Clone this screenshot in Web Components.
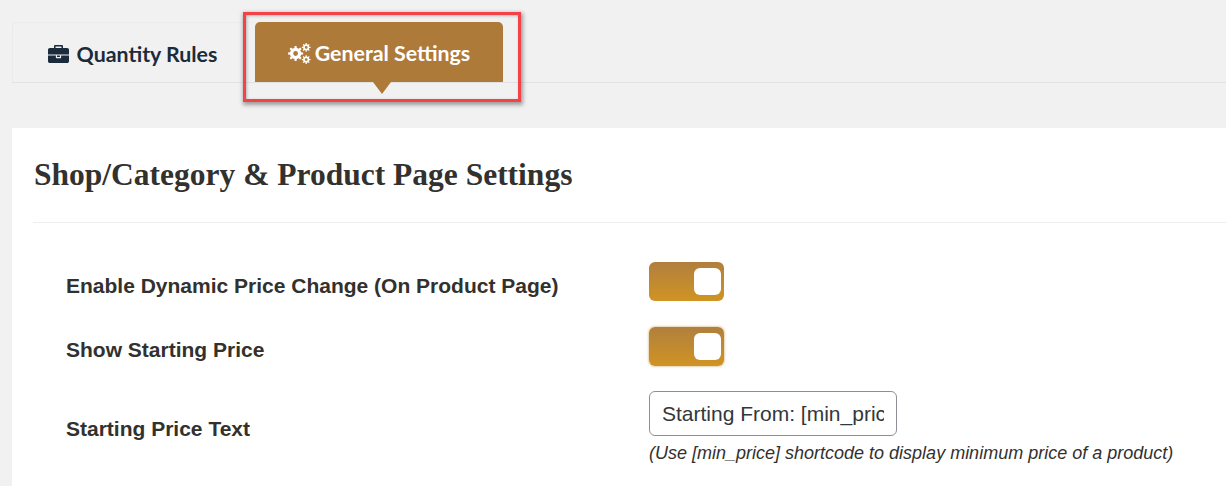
<!DOCTYPE html>
<html>
<head>
<meta charset="utf-8">
<title>General Settings</title>
<style>
    html, body { margin: 0; padding: 0; }
    body { background: #f1f1f1; height: 486px; overflow: hidden; position: relative; }
</style>
</head>
<body>
<settings-tabs>
    <settings-tab icon="briefcase">Quantity Rules</settings-tab>
    <settings-tab icon="cogs" active>General Settings</settings-tab>
</settings-tabs>
<settings-card heading="Shop/Category &amp; Product Page Settings">
    <settings-row label="Enable Dynamic Price Change (On Product Page)" style="height:65px"><gold-toggle></gold-toggle></settings-row>
    <settings-row label="Show Starting Price" style="height:65px;--label-pad:6px"><gold-toggle glow></gold-toggle></settings-row>
    <settings-row label="Starting Price Text" style="height:92px">
        <text-field value="Starting From: [min_price]" hint="(Use [min_price] shortcode to display minimum price of a product)"></text-field>
    </settings-row>
</settings-card>
<red-marker></red-marker>

<script>
(function () {
    // gear outline, centred on cx,cy
    function gear(cx, cy, outer, inner, hole, teeth) {
        let d = "";
        let step = Math.PI * 2 / teeth;
        for (let i = 0; i < teeth; i++) {
            let a = i * step;
            let pts = [[inner, a - step * 0.5], [inner, a - step * 0.27], [outer, a - step * 0.17], [outer, a + step * 0.17], [inner, a + step * 0.27]];
            for (let p of pts) {
                let x = (cx + p[0] * Math.cos(p[1])).toFixed(2);
                let y = (cy + p[0] * Math.sin(p[1])).toFixed(2);
                d += (d === "" || (i === 0 && p === pts[0]) ? "M" : "L") + x + " " + y;
            }
        }
        d += "Z";
        d += `M${cx - hole} ${cy}a${hole} ${hole} 0 1 0 ${hole * 2} 0a${hole} ${hole} 0 1 0 ${-hole * 2} 0Z`;
        return d;
    }

    const icons = {
        briefcase: `<svg width="21" height="18" viewBox="0 0 1792 1536" fill="currentColor"><path d="M640 256h512V128H640v128zm1152 640v480q0 66-47 113t-113 47H160q-66 0-113-47T0 1376V896h672v160q0 26 19 45t45 19h320q26 0 45-19t19-45V896h672zm-768 0v128H768V896h256zm768-480v384H0V416q0-66 47-113t113-47h352V96q0-40 28-68t68-28h576q40 0 68 28t28 68v160h352q66 0 113 47t47 113z"/></svg>`,
        cogs: `<svg width="23" height="21" viewBox="0 0 23 21" fill="currentColor"><path fill-rule="evenodd" d="${gear(7.6, 10.5, 7.6, 5.6, 2.4, 8)}${gear(18.2, 4.4, 4.4, 3.1, 1.4, 8)}${gear(18.2, 16.6, 4.4, 3.1, 1.4, 8)}"/></svg>`
    };

    class SettingsTabs extends HTMLElement {
        constructor() {
            super();
            this.attachShadow({ mode: "open" }).innerHTML = `
              <style>
                  :host {
                      display: flex;
                      margin: 22px 0 0 12px;
                      height: 60px;
                      border-bottom: 1px solid #e2e2e2;
                  }
              </style>
              <slot></slot>`;
        }
    }

    class SettingsTab extends HTMLElement {
        constructor() {
            super();
            let icon = icons[this.getAttribute("icon")] || "";
            this.attachShadow({ mode: "open" }).innerHTML = `
              <style>
                  :host {
                      display: flex;
                      position: relative;
                      align-items: center;
                      justify-content: center;
                      box-sizing: border-box;
                      gap: 8px;
                      width: 243px;
                      height: 60px;
                      padding: 2px 3px 0 0;
                      font: 700 21.33px "Lato", sans-serif;
                      color: #1b2b3c;
                      border: 1px solid #ebebeb;
                      border-bottom: 0;
                      border-right: 0;
                      border-radius: 4px 0 0 0;
                  }
                  :host([active]) {
                      width: 248px;
                      gap: 4px;
                      padding: 2px 0 0;
                      color: #fff;
                      background: #ae7a3a;
                      border: 0;
                      border-radius: 5px 5px 0 0;
                  }
                  :host([active])::after {
                      content: "";
                      position: absolute;
                      left: 118px;
                      top: 60px;
                      border: 9.5px solid transparent;
                      border-top: 12px solid #ae7a3a;
                      border-bottom: 0;
                  }
                  svg { display: block; }
              </style>
              ${icon}<span><slot></slot></span>`;
        }
    }

    class SettingsCard extends HTMLElement {
        constructor() {
            super();
            this.attachShadow({ mode: "open" }).innerHTML = `
              <style>
                  :host {
                      display: block;
                      margin: 45px 0 0 12px;
                      height: 358px;
                      background: #fff;
                      padding-left: 21px;
                  }
                  h2 {
                      margin: 0;
                      height: 95px;
                      box-sizing: border-box;
                      padding: 30px 0 0 1px;
                      font: 700 31.5px/34px "Liberation Serif", serif;
                      color: #32312e;
                      border-bottom: 1px solid #eeeeee;
                  }
                  .rows { padding: 26px 0 0 33px; }
              </style>
              <h2>${this.getAttribute("heading")}</h2>
              <div class="rows"><slot></slot></div>`;
        }
    }

    class SettingsRow extends HTMLElement {
        constructor() {
            super();
            this.attachShadow({ mode: "open" }).innerHTML = `
              <style>
                  :host {
                      display: grid;
                      grid-template-columns: 583px 1fr;
                      align-items: center;
                  }
                  label {
                      padding-top: var(--label-pad, 7px);
                      font: 700 21px/25px "Liberation Sans", sans-serif;
                      color: #32312e;
                  }
              </style>
              <label>${this.getAttribute("label")}</label>
              <div><slot></slot></div>`;
        }
    }

    class GoldToggle extends HTMLElement {
        constructor() {
            super();
            this.attachShadow({ mode: "open" }).innerHTML = `
              <style>
                  :host {
                      display: flex;
                      justify-content: flex-end;
                      align-items: center;
                      box-sizing: border-box;
                      width: 75px;
                      height: 39px;
                      padding-right: 3px;
                      border-radius: 6px;
                      background: linear-gradient(#b17f3e, #d09423);
                  }
                  :host([glow]) { box-shadow: 0 0 2px 1px #e6d3ad; }
                  i {
                      display: block;
                      width: 27px;
                      height: 27px;
                      border-radius: 6px;
                      background: #fff;
                  }
              </style>
              <i></i>`;
        }
    }

    class TextField extends HTMLElement {
        constructor() {
            super();
            this.attachShadow({ mode: "open" }).innerHTML = `
              <style>
                  :host { display: block; margin-top: 5px; }
                  input {
                      display: block;
                      box-sizing: border-box;
                      width: 248px;
                      height: 45px;
                      padding: 0 12px;
                      font: 21px "Liberation Sans", sans-serif;
                      color: #32373c;
                      background: #fff;
                      border: 1px solid #8c8f94;
                      border-radius: 6px;
                      outline: 0;
                  }
                  em {
                      display: block;
                      margin-top: 6px;
                      font: italic 18px/22px "Liberation Sans", sans-serif;
                      color: #32312e;
                      white-space: nowrap;
                  }
              </style>
              <input type="text" autocomplete="off">
              <em>${this.getAttribute("hint")}</em>`;
            this.shadowRoot.querySelector("input").value = this.getAttribute("value");
        }
    }

    class RedMarker extends HTMLElement {
        constructor() {
            super();
            this.attachShadow({ mode: "open" }).innerHTML = `
              <style>
                  :host {
                      position: absolute;
                      left: 243px;
                      top: 12px;
                      width: 278px;
                      height: 90px;
                      box-sizing: border-box;
                      border: 3px solid #f44347;
                      box-shadow: 1px 2px 4px 1px rgba(0,0,0,.35), inset 1px 1px 3px rgba(0,0,0,.25);
                      pointer-events: none;
                  }
              </style>`;
        }
    }

    customElements.define("settings-tabs", SettingsTabs);
    customElements.define("settings-tab", SettingsTab);
    customElements.define("settings-card", SettingsCard);
    customElements.define("settings-row", SettingsRow);
    customElements.define("gold-toggle", GoldToggle);
    customElements.define("text-field", TextField);
    customElements.define("red-marker", RedMarker);
})();
</script>
</body>
</html>
